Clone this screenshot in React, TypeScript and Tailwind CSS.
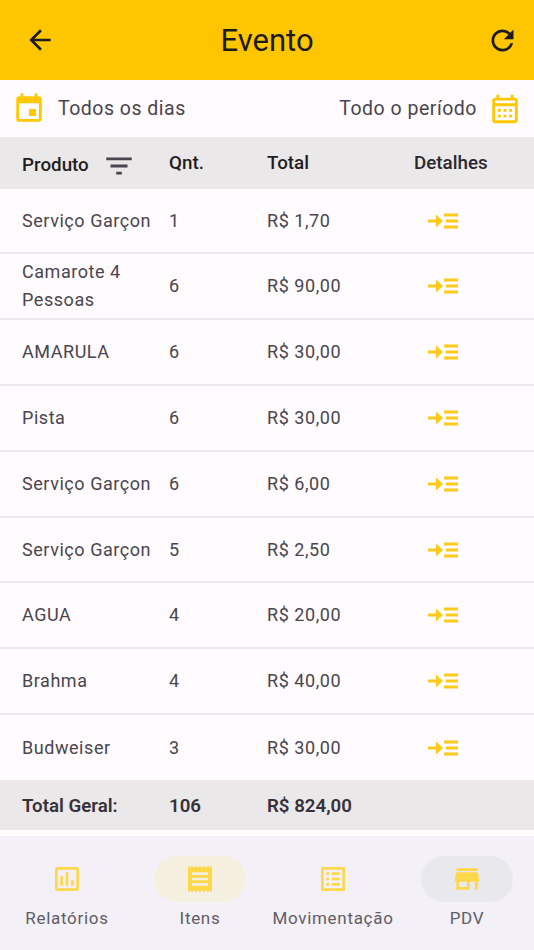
import { MdArrowBack, MdRefresh, MdEvent, MdOutlineCalendarMonth, MdFilterList, MdOutlineAssessment, MdReceipt, MdOutlineListAlt, MdStore } from 'react-icons/md';

const rows = [
  { name: 'Serviço Garçon', qty: '1', total: 'R$ 1,70', h: 'h-[65px]' },
  { name: 'Camarote 4 Pessoas', qty: '6', total: 'R$ 90,00', h: 'h-[66px]' },
  { name: 'AMARULA', qty: '6', total: 'R$ 30,00', h: 'h-[66px]' },
  { name: 'Pista', qty: '6', total: 'R$ 30,00', h: 'h-[66px]' },
  { name: 'Serviço Garçon', qty: '6', total: 'R$ 6,00', h: 'h-[66px]' },
  { name: 'Serviço Garçon', qty: '5', total: 'R$ 2,50', h: 'h-[65px]' },
  { name: 'AGUA', qty: '4', total: 'R$ 20,00', h: 'h-[66px]' },
  { name: 'Brahma', qty: '4', total: 'R$ 40,00', h: 'h-[66px]' },
  { name: 'Budweiser', qty: '3', total: 'R$ 30,00', h: 'h-[65px]' },
];

function DetailsIcon() {
  return (
    <svg width="30" height="16" viewBox="0 0 30 16" fill="none" className="text-[#ffcb1a]">
      <path d="M0 8h10" stroke="currentColor" strokeWidth="3" />
      <path d="M8 1.5 15 8l-7 6.5z" fill="currentColor" />
      <path d="M16 2h14M18 8h12M16 14h14" stroke="currentColor" strokeWidth="3" />
    </svg>
  );
}

const navItems = [
  { label: 'Relatórios', icon: MdOutlineAssessment, pill: '' },
  { label: 'Itens', icon: MdReceipt, pill: 'bg-[#f5efe0]' },
  { label: 'Movimentação', icon: MdOutlineListAlt, pill: '' },
  { label: 'PDV', icon: MdStore, pill: 'bg-[#e9e8ec]' },
];

export default function App() {
  return (
    <div className="flex h-[950px] w-[534px] flex-col overflow-hidden bg-[#fffbfe] font-['Roboto',sans-serif] text-[#49454f]">
      {/* Header */}
      <header className="flex h-20 shrink-0 items-center bg-[#ffc600] pl-[24px] pr-[15px] text-[#1c1b1f]">
        <MdArrowBack size={32} />
        <h1 className="flex-1 pr-[8px] text-center text-[31px] leading-none">Evento</h1>
        <MdRefresh size={33} />
      </header>

      {/* Filters */}
      <div className="flex h-[57px] shrink-0 items-center justify-between px-[12px] pt-[1px] text-[19.5px] tracking-[0.5px]">
        <div className="flex items-center gap-[12px]">
          <MdEvent size={34} className="text-[#ffc800]" />
          <span>Todos os dias</span>
        </div>
        <div className="flex items-center gap-[11px]">
          <span>Todo o período</span>
          <MdOutlineCalendarMonth size={34} className="text-[#ffc800]" />
        </div>
      </div>

      {/* Table header */}
      <div className="grid h-[52px] shrink-0 grid-cols-[169px_98px_147px_1fr] items-center bg-[#ebe8e9] text-[18.8px] font-medium text-[#1f1d22]">
        <div className="flex items-center gap-[13px] pl-[22px] pt-[5px]">
          <span>Produto</span>
          <MdFilterList size={34} className="text-[#49454f]" />
        </div>
        <span>Qnt.</span>
        <span>Total</span>
        <span className="whitespace-nowrap text-[#2a282e]">Detalhes</span>
      </div>

      {/* Rows */}
      <div className="shrink-0">
        {rows.map((row, i) => (
          <div
            key={i}
            className={`grid ${row.h} grid-cols-[169px_98px_1fr] items-center border-b-2 border-[#ebe8ea] text-[18px] leading-[28px] tracking-[0.55px] last:border-b-0`}
          >
            <span className="pl-[22px] pr-[10px]">{row.name}</span>
            <span>{row.qty}</span>
            <div className="grid grid-cols-[147px_1fr] items-center">
              <span>{row.total}</span>
              <div className="pl-[14px]">
                <DetailsIcon />
              </div>
            </div>
          </div>
        ))}
      </div>

      {/* Total */}
      <div className="grid h-[50px] shrink-0 grid-cols-[169px_98px_1fr] items-center bg-[#ebe8e9] pt-[3px] text-[18.7px] font-semibold text-[#35323a]">
        <span className="pl-[22px]">Total Geral:</span>
        <span>106</span>
        <span>R$ 824,00</span>
      </div>

      {/* Bottom nav */}
      <nav className="mt-[6px] grid flex-1 grid-cols-[133px_133px_133px_135px] bg-[#f3f0f7] pt-[20px]">
        {navItems.map((item) => {
          const Icon = item.icon;
          return (
            <div key={item.label} className="flex flex-col items-center">
              <div className={`flex h-[46px] w-[92px] items-center justify-center rounded-full ${item.pill}`}>
                <Icon size={32} className="text-[#ffd84a]" />
              </div>
              <span className="mt-[4px] whitespace-nowrap pl-[1px] text-[17px] leading-[24px] tracking-[0.7px] text-[#605d66]">
                {item.label}
              </span>
            </div>
          );
        })}
      </nav>
    </div>
  );
}
